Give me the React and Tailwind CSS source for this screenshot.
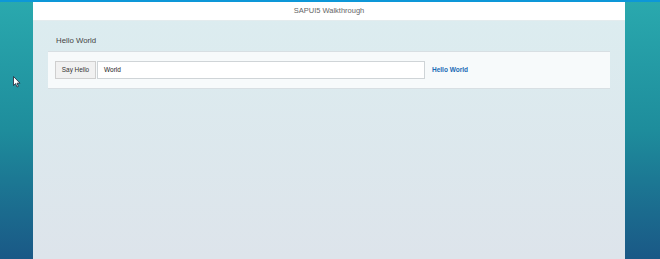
import React from "react";

export default function App() {
  return (
    <div
      className="relative w-[660px] h-[259px] overflow-hidden bg-gradient-to-b from-[#2aa9ae] via-[#1e8d9c] to-[#1a5886] flex flex-col"
      style={{ fontFamily: '"Liberation Sans", Arial, sans-serif' }}
    >
      <div className="h-[2px] w-full bg-[#0d97d8] shrink-0" />
      <div className="ml-[33px] w-[592px] flex-1 flex flex-col bg-gradient-to-b from-[#dcedf0] to-[#dde4eb]">
        <div className="h-[19px] bg-white flex items-center justify-center text-[7.5px] text-[#666] border-b border-[#e4ecee]">
          SAPUI5 Walkthrough
        </div>
        <div className="px-[15px] pt-[14px]">
          <div className="h-[11px] pl-[8px] flex items-center text-[7.8px] text-[#444]">Hello World</div>
          <div className="mt-[5px] h-[38px] bg-[#f7fafb] border-y border-[#d8dfe3] flex items-center px-[7px]">
            <div className="h-[18px] w-[41px] bg-[#f1f1f1] border border-[#cfcfcf] flex items-center justify-center text-[6.4px] text-[#333]">
              Say Hello
            </div>
            <div className="ml-[1px] h-[18px] w-[328px] bg-white border border-[#cfd4d7] flex items-center pl-[6px] text-[6.5px] text-[#222]">
              World
            </div>
            <div className="ml-[7px] text-[6.5px] font-bold text-[#1a6ab5]">Hello World</div>
          </div>
        </div>
      </div>
      <svg className="absolute left-[13px] top-[76px]" width="8" height="12" viewBox="0 0 8 12">
        <path d="M0.5 0.5 L0.5 9.5 L2.6 7.6 L4 11 L5.4 10.4 L4 7.2 L7 7.2 Z" fill="#fff" stroke="#223" strokeWidth="0.8" />
      </svg>
    </div>
  );
}
